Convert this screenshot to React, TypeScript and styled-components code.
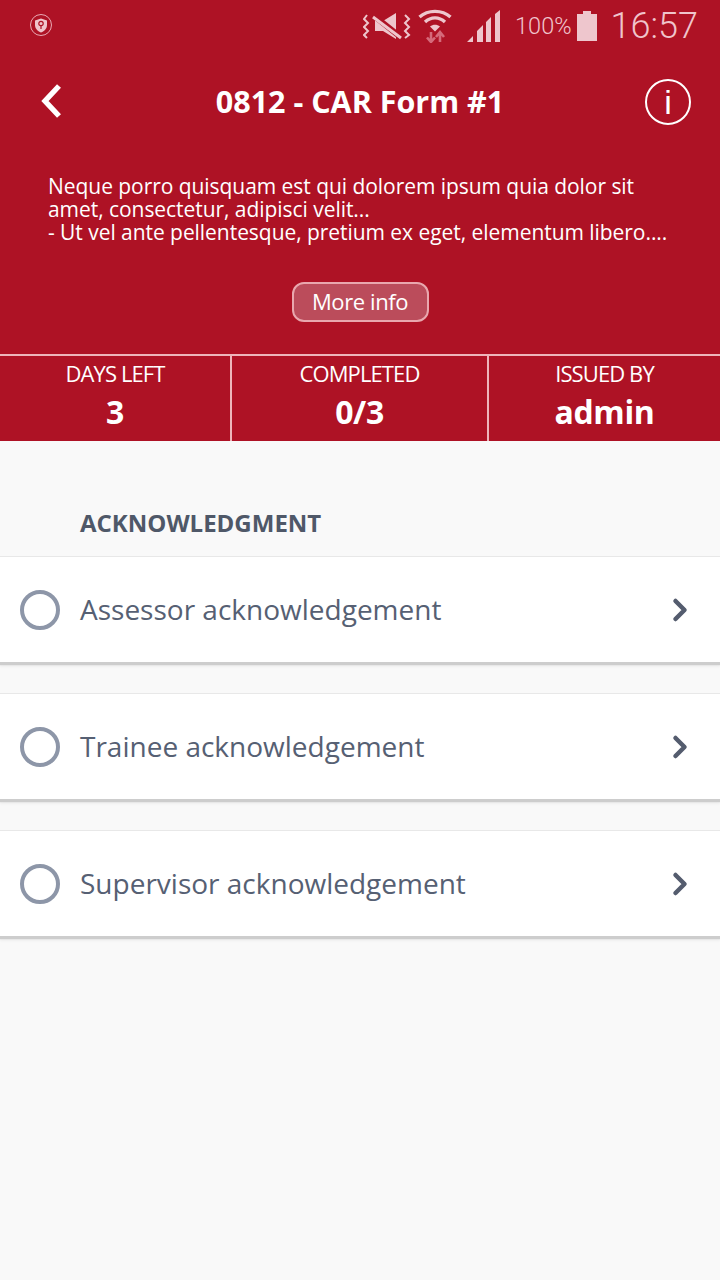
import { FC } from 'react';
import styled, { createGlobalStyle } from 'styled-components';
import { ChevronRight } from 'lucide-react';

const GlobalStyle = createGlobalStyle`
  html, body {
    margin: 0;
    padding: 0;
    background: #f9f9f9;
  }
  body {
    font-family: "Open Sans", "Noto Sans", sans-serif;
  }
`;

const items = ['Assessor acknowledgement', 'Trainee acknowledgement', 'Supervisor acknowledgement'];

const stats = [
  { label: 'DAYS LEFT', value: '3', width: 232 },
  { label: 'COMPLETED', value: '0/3', width: 257 },
  { label: 'ISSUED BY', value: 'admin', width: 231 },
];

const StatusIcons: FC = () => (
  <StatusBar>
    <ShieldIcon width="26" height="26" viewBox="0 0 26 26">
      <circle cx="13" cy="12" r="10.5" fill="none" stroke="#e9a9b4" strokeWidth="1" />
      <path d="M13 5.5 L19 7.5 V12 C19 15.5 16.5 18 13 19.5 C9.5 18 7 15.5 7 12 V7.5 Z" fill="#f0c4cc" />
      <circle cx="13" cy="10.5" r="2.2" fill="none" stroke="#ae1225" strokeWidth="1.2" />
      <path d="M13 12.5 V16" stroke="#ae1225" strokeWidth="1.2" />
    </ShieldIcon>
    <StatusRight>
      <svg width="48" height="32" viewBox="0 0 48 32">
        <path d="M12 11 H20 L33 3 V29 L20 21 H12 Z" fill="#eec6cd" />
        <path d="M10 5 L40 29" stroke="#ae1225" strokeWidth="6" />
        <path d="M10 7 L38 28" stroke="#eec6cd" strokeWidth="3" />
        <path d="M4 5 L1 9 L5 13 L1 17 L5 21 L1 25 L4 28 M42 5 L46 9 L42 13 L46 17 L42 21 L46 25 L42 28" fill="none" stroke="#eec6cd" strokeWidth="2" />
      </svg>
      <WifiIcon width="34" height="34" viewBox="0 0 34 34">
        <path d="M1.5 8 C10 0.5 24 0.5 32.5 8" fill="none" stroke="#eec6cd" strokeWidth="3.4" />
        <path d="M7 13 C13 7.5 21 7.5 27 13" fill="none" stroke="#eec6cd" strokeWidth="3.4" />
        <path d="M12 17.5 C15 15 19 15 22 17.5 L17 22.5 Z" fill="#eec6cd" />
        <path d="M13 23 V33 M9 28.5 L13 33 L17 28.5" fill="none" stroke="#d56a7a" strokeWidth="2.6" />
        <path d="M22 33 V24 M18 28 L22 23 L26 28" fill="none" stroke="#d56a7a" strokeWidth="2.6" />
      </WifiIcon>
      <SignalIcon width="33" height="33" viewBox="0 0 33 33">
        <path d="M0 32 L6 26 V32 Z M10 32 V21 L16 15 V32 Z M19 32 V12 L24 7 V32 Z M28 32 V4 L33 0 V32 Z" fill="#eec6cd" />
      </SignalIcon>
      <Percent>100%</Percent>
      <svg width="20" height="30" viewBox="0 0 20 30">
        <path d="M6 0 H14 V3 H20 V30 H0 V3 H6 Z" fill="#eec6cd" />
      </svg>
      <Clock>16:57</Clock>
    </StatusRight>
  </StatusBar>
);

export default function App() {
  return (
    <Page>
      <GlobalStyle />
      <Header>
        <StatusIcons />
        <TitleRow>
          <BackButton>
            <svg width="24" height="36" viewBox="0 0 24 36">
              <path d="M20 3 L6 18 L20 33" fill="none" stroke="#fff" strokeWidth="5.4" />
            </svg>
          </BackButton>
          <Title>0812 - CAR Form #1</Title>
          <InfoIcon>i</InfoIcon>
        </TitleRow>
        <Description>
          Neque porro quisquam est qui dolorem ipsum quia dolor sit
          <br />
          amet, consectetur, adipisci velit...
          <br />- Ut vel ante pellentesque, pretium ex eget, elementum libero....
        </Description>
        <ButtonRow>
          <MoreInfo>More info</MoreInfo>
        </ButtonRow>
        <StatsRow>
          {stats.map((stat) => (
            <Stat key={stat.label} $width={stat.width}>
              <StatLabel>{stat.label}</StatLabel>
              <StatValue>{stat.value}</StatValue>
            </Stat>
          ))}
        </StatsRow>
      </Header>
      <SectionTitle>ACKNOWLEDGMENT</SectionTitle>
      <List>
        {items.map((item) => (
          <Row key={item}>
            <Radio />
            <RowText>{item}</RowText>
            <ChevronRight size={36} strokeWidth={3} color="#545c6e" />
          </Row>
        ))}
      </List>
    </Page>
  );
}

const Page = styled.div`
  width: 720px;
  height: 1280px;
  overflow: hidden;
  background: #f9f9f9;
`;

const Header = styled.header`
  background: #ae1225;
  color: #fff;
`;

const StatusBar = styled.div`
  height: 52px;
  display: flex;
  align-items: center;
  justify-content: space-between;
  padding: 0 22px 0 28px;
`;

const ShieldIcon = styled.svg`
  display: block;
`;

const StatusRight = styled.div`
  display: flex;
  align-items: center;
  color: #f0c4cc;
`;

const WifiIcon = styled.svg`
  margin-left: 7px;
`;

const SignalIcon = styled.svg`
  margin-left: 15px;
`;

const Percent = styled.span`
  font-family: Roboto, sans-serif;
  font-size: 23.5px;
  font-weight: 300;
  margin: 0 5px 0 15px;
`;

const Clock = styled.span`
  font-family: Roboto, sans-serif;
  font-size: 36px;
  font-weight: 300;
  margin-left: 14px;
`;

const TitleRow = styled.div`
  height: 100px;
  display: flex;
  align-items: center;
  justify-content: space-between;
  padding: 0 29px;
`;

const BackButton = styled.div`
  display: flex;
  width: 46px;
  padding-left: 10px;
  box-sizing: border-box;
  margin-top: -2px;
`;

const Title = styled.h1`
  margin: -2px 0 0;
  font-size: 30.5px;
  font-weight: 700;
  letter-spacing: 0;
`;

const InfoIcon = styled.div`
  width: 42px;
  height: 42px;
  border: 2px solid #fff;
  border-radius: 50%;
  display: flex;
  align-items: center;
  justify-content: center;
  font-family: "Liberation Sans", sans-serif;
  font-size: 34px;
  font-weight: 400;
`;

const Description = styled.p`
  margin: 0;
  padding: 23px 40px 0 48px;
  font-size: 21px;
  line-height: 23px;
  letter-spacing: -0.05px;
  white-space: nowrap;
`;

const ButtonRow = styled.div`
  display: flex;
  justify-content: center;
  padding: 38px 0 32px;
`;

const MoreInfo = styled.button`
  width: 137px;
  height: 40px;
  padding: 0 0 2px;
  border: 2px solid #e9a7ae;
  border-radius: 12px;
  background: #bb4c5b;
  color: #fff;
  font-family: inherit;
  font-size: 22px;
  letter-spacing: -0.4px;
`;

const StatsRow = styled.div`
  display: flex;
  height: 85px;
  border-top: 2px solid #eeb5bb;
`;

const Stat = styled.div<{ $width: number }>`
  width: ${(p) => p.$width}px;
  box-sizing: border-box;
  text-align: center;
  &:not(:last-child) {
    border-right: 2px solid #eeb5bb;
  }
`;

const StatLabel = styled.div`
  margin-top: 4px;
  font-size: 22px;
  line-height: 26px;
  letter-spacing: -0.9px;
`;

const StatValue = styled.div`
  margin-top: 4px;
  font-size: 32px;
  line-height: 44px;
  font-weight: 700;
  letter-spacing: -0.4px;
`;

const SectionTitle = styled.h2`
  margin: 0;
  padding: 66px 0 17px 80px;
  font-size: 24px;
  line-height: 32px;
  font-weight: 700;
  color: #4f5868;
`;

const List = styled.div`
  display: flex;
  flex-direction: column;
  gap: 31px;
`;

const Row = styled.div`
  height: 105px;
  display: flex;
  align-items: center;
  padding: 0 22px 0 20px;
  background: #fff;
  border-top: 1px solid #e8e8e8;
  box-shadow: 0 3px 1px #cdcdcd, 0 4px 3px #e6e6e6;
`;

const Radio = styled.span`
  width: 40px;
  height: 40px;
  box-sizing: border-box;
  border: 4px solid #8d96a8;
  border-radius: 50%;
`;

const RowText = styled.span`
  flex: 1;
  margin: -1px 0 0 20px;
  font-size: 28px;
  color: #566073;
`;
